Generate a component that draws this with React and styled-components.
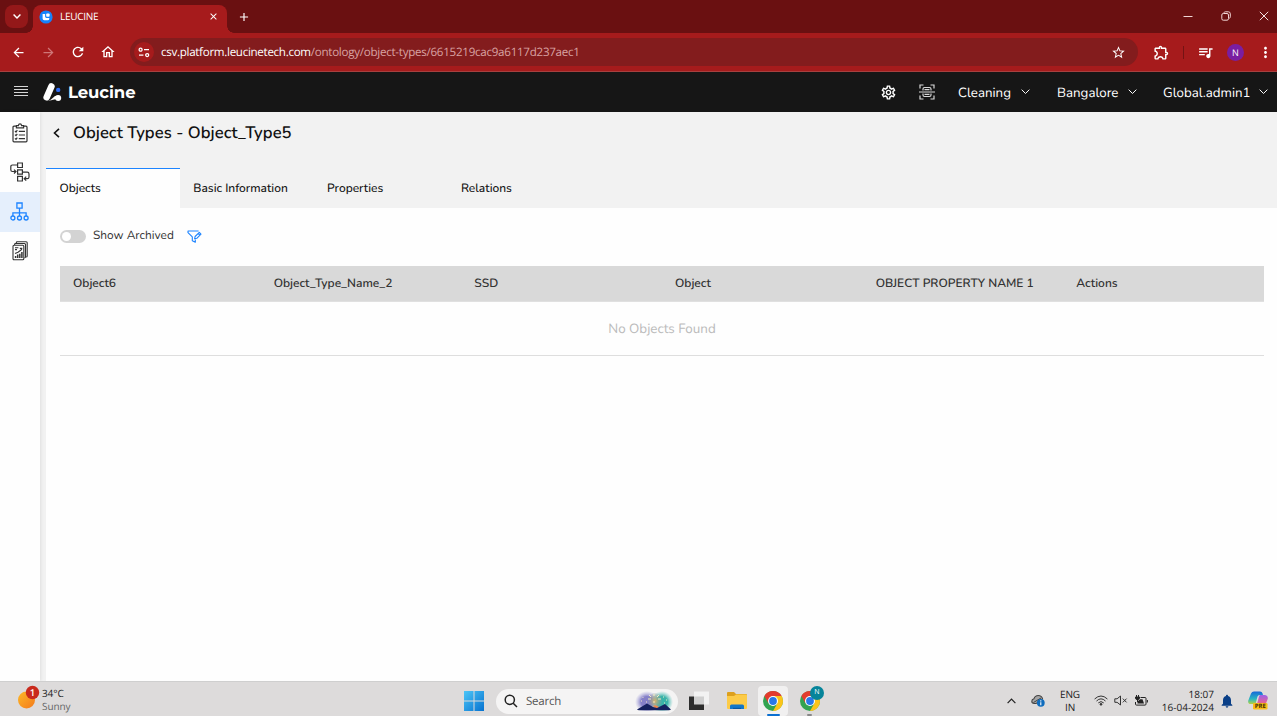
import React from 'react';
import styled, {createGlobalStyle, css} from 'styled-components';
import {
    MdArrowBack,
    MdArrowForward,
    MdClose,
    MdMoreVert,
    MdOutlineExtension,
    MdOutlineHome,
    MdOutlineSettings,
    MdQueueMusic,
    MdRefresh,
    MdStarBorder,
    MdAdd,
    MdNotifications
} from 'react-icons/md';

const appFont = `Nunito, Lato, 'Noto Sans', sans-serif`
const systemFont = `'Segoe UI', 'Open Sans', 'Noto Sans', sans-serif`

const tabs = ['Objects', 'Basic Information', 'Properties', 'Relations']
const columns = ['Object6', 'Object_Type_Name_2', 'SSD', 'Object', 'OBJECT PROPERTY NAME 1', 'Actions']

const Chevron = ({size = 9, color = '#fff', weight = 1.1}) => (
    <svg width={size} height={size * 0.6} viewBox="0 0 10 6" fill="none" stroke={color} strokeWidth={weight}>
        <path d="M.7.7 5 5 9.3.7"/>
    </svg>
)

const Favicon = () => (
    <svg width="14" height="14" viewBox="0 0 14 14">
        <circle cx="7" cy="7" r="6.6" fill="#1682fb"/>
        <path d="M3.600 4v4.600q0 1.700 1.700 1.700h3.400q1.600 0 1.600-1.500V7.900H7.400q-1.300 0-1.300-1.300V4z" fill="#fff"/>
        <rect x="7.200" y="3.400" width="3.400" height="3.400" rx=".8" fill="#fff"/>
    </svg>
)

const SiteInfo = () => (
    <svg width="12" height="11" viewBox="0 0 12 11" fill="none" stroke="#fff" strokeWidth="1.3">
        <circle cx="2.6" cy="2.7" r="1.5"/>
        <path d="M6 2.7h5M1 8.1h4.4"/>
        <circle cx="9.2" cy="8.1" r="1.5"/>
    </svg>
)

const LogoMark = () => (
    <svg width="19" height="20" viewBox="0 0 19 20">
        <path d="M3.700 15.300 8.400 4.500" stroke="#fff" strokeWidth="6.600" strokeLinecap="round"/>
        <path d="M5 18.500q3-.2 5-2.700 1.500-2.300 5-2.300v4q-3-.8-5 .3-1.500.8-5 .7z" fill="#fff"/>
        <circle cx="15.200" cy="16" r="3" fill="#fff"/>
        <circle cx="15.200" cy="7.900" r="2.200" fill="#2d6bf3"/>
    </svg>
)

const ScanIcon = () => (
    <svg width="16" height="16" viewBox="0 0 16 16" fill="none" stroke="#d8d8d8" strokeWidth="1.2">
        <path d="M1 4.5V1h3.5M11.5 1H15v3.5M15 11.5V15h-3.5M4.5 15H1v-3.5M0 8h16"/>
        <path d="M4 6.500V5q0-1.500 1.500-1.500h5q1.500 0 1.500 1.500v1.500M4 9.500V11q0 1.500 1.500 1.500h5q1.500 0 1.500-1.500V9.500M5.500 5.700h5M5.500 10.300h5"/>
    </svg>
)

const ClipboardIcon = () => (
    <svg width="16" height="20" viewBox="0 0 16 20" fill="none" stroke="#333" strokeWidth="1.2">
        <path d="M4.4 3.2H2q-1 0-1 1v13.600q0 1 1 1h12q1 0 1-1V4.200q0-1-1-1h-2.400"/>
        <path d="M4.4 4.8V2.6h2Q6.600.8 8 .8t1.600 1.8h2v2.200z"/>
        <path d="m3 8 1 1 1.300-1.800M3 11.700l1 1 1.300-1.800M3 15.400l1 1 1.300-1.800M6.800 8.300H13M6.800 12H13M6.800 15.700H13"/>
    </svg>
)

const WorkflowIcon = () => (
    <svg width="20" height="20" viewBox="0 0 20 20" fill="none" stroke="#333" strokeWidth="1.2">
        <path d="M7.600 1h4.800v4.500H7.600zM7.600 7.800h4.800v4.400H7.600zM7.600 14.400h4.800V19H7.600z"/>
        <path d="M7.600 3H2.500Q.8 3 .8 4.700v3q0 1.800 1.700 1.800h3M4 7.600l2 1.900-2 2M12.400 10.200h4.800q1.800 0 1.800 1.700v3q0 1.800-1.800 1.800h-2.600M16.200 14.700l-2 2 2 1.900"/>
    </svg>
)

const OntologyIcon = () => (
    <svg width="19" height="19" viewBox="0 0 19 19" fill="none" stroke="#1d84ff" strokeWidth="1.3">
        <path d="M6.900 1h5.200v5.200H6.900zM9.500 6.200v7.800M2.900 14v-3.200h13.200V14"/>
        <circle cx="2.900" cy="16" r="2"/>
        <circle cx="9.500" cy="16" r="2"/>
        <circle cx="16.100" cy="16" r="2"/>
    </svg>
)

const ReportIcon = () => (
    <svg width="16" height="20" viewBox="0 0 16 20" fill="none" stroke="#333" strokeWidth="1.1">
        <rect x="1" y="4.200" width="10.800" height="14.600" rx="1"/>
        <path d="M2.600 4V3.400q0-.9.9-.9h9q1 0 1 1v12.300q0 1-1 1M4.300 2.200V1.700q0-.9.9-.9h9q1 0 1 1V15q0 1-1 1"/>
        <path d="M3 6.700h3.400M3 8.600h2M7.800 7.400h2.500"/>
        <path d="M3.600 17v-2M5.700 17v-3.500M7.800 17v-4.200M9.900 17v-6" strokeWidth="1.500"/>
        <path d="m3 12.600 3-1.400 4-3"/>
    </svg>
)

const FilterIcon = () => (
    <svg width="15" height="13" viewBox="0 0 15 13" fill="none" stroke="#1d84ff" strokeWidth="1.100" strokeLinejoin="round">
        <path d="M11.600 1H1v1.700l4.300 4.200v3.900l3 1.500V9.500"/>
        <path d="m7.600 8.800.5-2.300 4.200-4.100 1.700 1.700L9.800 8.300zM11.200 3.500l1.700 1.700"/>
    </svg>
)

const WeatherIcon = () => (
    <svg width="24" height="26" viewBox="0 0 24 26">
        <defs>
            <linearGradient id="sun" x1="0" y1="0" x2="1" y2="1">
                <stop offset="0" stopColor="#fdb827"/>
                <stop offset="1" stopColor="#f47a1c"/>
            </linearGradient>
        </defs>
        <circle cx="9.500" cy="15" r="8.500" fill="url(#sun)"/>
        <circle cx="15.500" cy="7.500" r="6.700" fill="#c92a1d"/>
        <text x="15.500" y="11" fill="#fff" fontSize="9.500" textAnchor="middle" fontFamily="Open Sans" fontWeight="600">1</text>
    </svg>
)

const WindowsIcon = () => (
    <svg width="20" height="20" viewBox="0 0 20 20">
        <defs>
            <linearGradient id="win" x1="0" y1="0" x2="1" y2="1">
                <stop offset="0" stopColor="#4cc6f7"/>
                <stop offset="1" stopColor="#0671cf"/>
            </linearGradient>
        </defs>
        <path d="M0 0h9.500v9.500H0zM10.500 0H20v9.500h-9.500zM0 10.500h9.500V20H0zM10.500 10.500H20V20h-9.500z" fill="url(#win)"/>
    </svg>
)

const Fireworks = () => (
    <svg width="38" height="20" viewBox="0 0 38 20">
        <defs>
            <radialGradient id="violet"><stop offset=".5" stopColor="#8580c8"/><stop offset="1" stopColor="#aaa6dd" stopOpacity="0"/></radialGradient>
            <radialGradient id="teal"><stop offset=".5" stopColor="#39b3a9"/><stop offset="1" stopColor="#75ccc5" stopOpacity="0"/></radialGradient>
            <radialGradient id="glow"><stop offset="0" stopColor="#d9b26a"/><stop offset="1" stopColor="#7f9aa0" stopOpacity=".2"/></radialGradient>
        </defs>
        <ellipse cx="12" cy="11" rx="12" ry="11" fill="url(#violet)"/>
        <ellipse cx="27" cy="11" rx="11" ry="11" fill="url(#teal)"/>
        <ellipse cx="20" cy="10" rx="7" ry="8" fill="url(#glow)"/>
        <path d="m19 3 0 2M14 4l2 2M24 4l-2 2M13 8h3M23 8h3M8 6v.8M6 10h1M11 11h1M28 6h1M31 9h1M29 12h1M19 10v2" stroke="#fff4c4" strokeWidth=".9"/>
        <path d="M18 15q2.500-2 6 1l-3 2z" fill="#f0874c"/>
        <path d="M2 18.500 12 12.500l6 3.500 4 1 8-4 6 5.500q-1 .8-2 .8H4q-1.500 0-2-.8z" fill="#15215f"/>
    </svg>
)

const TaskViewIcon = () => (
    <svg width="20" height="20" viewBox="0 0 20 20">
        <rect y="5.500" width="15" height="13.500" fill="#2d2d2d"/>
        <rect x="5" y=".5" width="15" height="13" fill="#f7f7f7" fillOpacity=".8"/>
    </svg>
)

const FolderIcon = () => (
    <svg width="20" height="18" viewBox="0 0 20 18">
        <path d="M0 1q0-1 1-1h6l2 2h10q1 0 1 1v5H0z" fill="#dda01d"/>
        <path d="M0 4h7l2-1.500h10q1 0 1 1V16q0 1-1 1H1q-1 0-1-1z" fill="#fccb48"/>
        <path d="M3 17v-3q0-1.500 1.500-1.500h11q1.500 0 1.500 1.500v3z" fill="#1277c9"/>
        <path d="M6 17v-1.200h8V17z" fill="#0a569f"/>
    </svg>
)

const ChromeIcon = () => (
    <svg width="20" height="20" viewBox="0 0 20 20">
        <circle cx="10" cy="10" r="10" fill="#32a350"/>
        <path d="M1.340 5A10 10 0 0 1 18.660 5H10L5.670 12.500z" fill="#e33b2e"/>
        <path d="M18.660 5A10 10 0 0 1 10 20l4.330-7.500L10 5z" fill="#fcc419"/>
        <circle cx="10" cy="10" r="5" fill="#fff"/>
        <circle cx="10" cy="10" r="3.900" fill="#2878e8"/>
    </svg>
)

const CloudIcon = () => (
    <svg width="14" height="13" viewBox="0 0 14 13">
        <path d="M3.200 9.500Q.8 9.300.8 7.200T3 4.700Q4 1.500 7.300 1.500t4.200 3.200L10 7 5 9.500z" fill="#a5a5a5" stroke="#444" strokeWidth="1.100"/>
        <path d="M2.500 8.500 10 4" stroke="#444"/>
        <circle cx="9.800" cy="8.800" r="3.900" fill="#0f6cbd"/>
        <path d="M9.800 8.200v3M9.800 6.300v1.100" stroke="#fff" strokeWidth="1.100"/>
    </svg>
)

const WifiIcon = () => (
    <svg width="14" height="11" viewBox="0 0 14 11" fill="none" stroke="#333" strokeWidth="1">
        <path d="M.6 4Q7-2 13.400 4M2.500 6Q7 1.700 11.500 6M4.300 7.900Q7 5.300 9.700 7.900"/>
        <circle cx="7" cy="9.300" r=".9" fill="#333"/>
    </svg>
)

const MuteIcon = () => (
    <svg width="14" height="11" viewBox="0 0 14 11" fill="none" stroke="#333" strokeWidth="1">
        <path d="M.8 3.800h2.300L6.500 1v9L3.100 7.300H.8zM8.800 3.600l3.800 3.800M12.600 3.600 8.800 7.400"/>
    </svg>
)

const BatteryIcon = () => (
    <svg width="14" height="12" viewBox="0 0 14 12" fill="none" stroke="#222" strokeWidth="1">
        <path d="M6.500 2.500H11q1 0 1 1v5.600q0 1-1 1H2.500q-1 0-1-1V7M13.400 5v2.500"/>
        <path d="M3.500 8.600V6.500L6 4.300h2.500L10 8.600z" fill="#222" stroke="none"/>
        <path d="M2.500 0v2M4.500 0v2M1.500 2h4v1.300q0 1.200-2 1.200t-2-1.200zM3.500 4v3" fill="#222"/>
    </svg>
)

const CopilotIcon = () => (
    <svg width="20" height="19" viewBox="0 0 20 19">
        <defs>
            <linearGradient id="cpA" x1="0" y1="0" x2="0" y2="1">
                <stop offset="0" stopColor="#1668d9"/>
                <stop offset=".6" stopColor="#2ab7c2"/>
                <stop offset="1" stopColor="#b4d33f"/>
            </linearGradient>
            <linearGradient id="cpB" x1="0" y1="0" x2="0" y2="1">
                <stop offset="0" stopColor="#9b62e8"/>
                <stop offset="1" stopColor="#f2638a"/>
            </linearGradient>
        </defs>
        <path d="M6 .5h6q2 0 2.600 2L15 4h-3.500q-1.500 0-2 1.500L7.500 13H3q-3.500 0-2.700-3.500L3 2.500Q3.800.5 6 .5z" fill="url(#cpA)"/>
        <path d="M12 4h4.500q4 .5 3.200 4l-2 5H9l2-7.500Q11.300 4 12 4z" fill="url(#cpB)"/>
        <rect x="5" y="12" width="14.500" height="6.500" rx="1.200" fill="#fbbd19"/>
        <text x="12.300" y="17.400" fill="#3c2b00" fontSize="6" fontWeight="700" textAnchor="middle" fontFamily="Open Sans">PRE</text>
    </svg>
)

const App = () => (
    <>
        <GlobalStyle/>
        <Screen>
            <TabStrip>
                <TabSearch><Chevron size={8} weight={1.8}/></TabSearch>
                <BrowserTab>
                    <Favicon/>
                    <TabTitle>LEUCINE</TabTitle>
                    <MdClose size={11}/>
                </BrowserTab>
                <NewTab><MdAdd size={14}/></NewTab>
                <WindowControls>
                    <svg width="10" height="10" viewBox="0 0 10 10" stroke="#f0d5d5"><path d="M.5 5.500h9"/></svg>
                    <svg width="10" height="10" viewBox="0 0 10 10" fill="none" stroke="#f0d5d5">
                        <rect x=".8" y="2.500" width="6.700" height="6.700" rx="1.500"/>
                        <path d="M2.800 1.800Q3.200.8 4.300.8h3q2 0 2 2v3q0 1.200-1 1.500"/>
                    </svg>
                    <svg width="10" height="10" viewBox="0 0 10 10" stroke="#f5e0e0"><path d="m.8.8 8.400 8.400M9.200.8.800 9.200"/></svg>
                </WindowControls>
            </TabStrip>

            <Toolbar>
                <ToolButton><MdArrowBack size={15}/></ToolButton>
                <ToolButton $dim><MdArrowForward size={15}/></ToolButton>
                <ToolButton><MdRefresh size={16}/></ToolButton>
                <ToolButton><MdOutlineHome size={16}/></ToolButton>
                <Omnibox>
                    <SiteBadge><SiteInfo/></SiteBadge>
                    <Url><b>csv.platform.leucinetech.com</b>/ontology/object-types/6615219cac9a6117d237aec1</Url>
                    <MdStarBorder size={15}/>
                </Omnibox>
                <Extensions>
                    <MdOutlineExtension size={17}/>
                    <Separator/>
                    <MdQueueMusic size={17}/>
                    <Avatar>N</Avatar>
                    <MdMoreVert size={17}/>
                </Extensions>
            </Toolbar>

            <AppHeader>
                <Burger><i/><i/><i/><i/></Burger>
                <LogoMark/>
                <Brand>Leucine</Brand>
                <HeaderIcons>
                    <MdOutlineSettings size={17}/>
                    <ScanIcon/>
                </HeaderIcons>
                <Picker $width={99} $gap={27}><span>Cleaning</span><Chevron/></Picker>
                <Picker $width={106} $gap={26}><span>Bangalore</span><Chevron/></Picker>
                <Picker $width={114} $gap={9}><span>Global.admin1</span><Chevron/></Picker>
            </AppHeader>

            <Body>
                <Sidebar>
                    <SideItem><ClipboardIcon/></SideItem>
                    <SideItem><WorkflowIcon/></SideItem>
                    <SideItem $active><OntologyIcon/></SideItem>
                    <SideItem><ReportIcon/></SideItem>
                </Sidebar>
                <Main>
                    <Title>
                        <svg width="7" height="10" viewBox="0 0 7 10" fill="none" stroke="#111" strokeWidth="1.600"><path d="M6 .8 1.500 5 6 9.200"/></svg>
                        <h1>Object Types - Object_Type5</h1>
                    </Title>
                    <Tabs>
                        {tabs.map((name, i) => <Tab key={name} $active={i === 0}>{name}</Tab>)}
                    </Tabs>
                    <Panel>
                        <Filters>
                            <Toggle/>
                            <span>Show Archived</span>
                            <FilterIcon/>
                        </Filters>
                        <TableHead>
                            {columns.map(name => <HeadCell key={name}>{name}</HeadCell>)}
                        </TableHead>
                        <EmptyRow>No Objects Found</EmptyRow>
                    </Panel>
                </Main>
            </Body>

            <Taskbar>
                <Weather>
                    <WeatherIcon/>
                    <Lines><span>34°C</span><Muted>Sunny</Muted></Lines>
                </Weather>
                <Pinned>
                    <WindowsIcon/>
                    <SearchBox>
                        <svg width="14" height="14" viewBox="0 0 14 14" fill="none" stroke="#222" strokeWidth="1.500">
                            <circle cx="5.800" cy="5.800" r="4.600"/><path d="m9.200 9.200 3.800 3.800"/>
                        </svg>
                        <span>Search</span>
                        <Fireworks/>
                    </SearchBox>
                    <TaskItem $width={38}><TaskViewIcon/></TaskItem>
                    <TaskItem $width={37}><FolderIcon/></TaskItem>
                    <TaskItem $width={36}>
                        <OpenTile><ChromeIcon/></OpenTile>
                        <Running $active/>
                    </TaskItem>
                    <TaskItem $width={37}>
                        <ChromeIcon/>
                        <ProfileBadge>N</ProfileBadge>
                        <Running/>
                    </TaskItem>
                </Pinned>
                <Tray>
                    <TrayCell $width={25}>
                        <svg width="9" height="6" viewBox="0 0 9 6" fill="none" stroke="#222" strokeWidth="1.200"><path d="M.6 5.200 4.500 1.200l3.900 4"/></svg>
                    </TrayCell>
                    <TrayCell $width={27}><CloudIcon/></TrayCell>
                    <TrayCell $width={38}><Lines $align="center"><span>ENG</span><span>IN</span></Lines></TrayCell>
                    <TrayCell $width={24}><WifiIcon/></TrayCell>
                    <TrayCell $width={16}><MuteIcon/></TrayCell>
                    <TrayCell $width={24}><BatteryIcon/></TrayCell>
                    <Clock><span>18:07</span><span>16-04-2024</span></Clock>
                    <TrayCell $width={25}><MdNotifications size={16} color="#0a3f87"/></TrayCell>
                    <TrayCell $width={37}><CopilotIcon/></TrayCell>
                </Tray>
            </Taskbar>
        </Screen>
    </>
)

const GlobalStyle = createGlobalStyle`
  body {
    margin: 0;
    overflow: hidden;
    text-rendering: geometricPrecision;
  }

  *, *::before, *::after {
    box-sizing: border-box;
  }

  svg {
    flex: none;
    display: block;
  }
`

const Screen = styled.div`
  width: 1277px;
  height: 716px;
  display: flex;
  flex-direction: column;
  overflow: hidden;
  white-space: nowrap;
  font-family: ${appFont};
  background: #fefefe;
`

const TabStrip = styled.div`
  height: 33px;
  display: flex;
  align-items: flex-start;
  padding: 5px 0 0 5px;
  background: #6a1011;
  color: #fff;
  font-family: ${systemFont};
`

const TabSearch = styled.div`
  width: 23px;
  height: 23px;
  border-radius: 8px;
  display: flex;
  align-items: center;
  justify-content: center;
  background: #941819;
`

const BrowserTab = styled.div`
  position: relative;
  width: 194px;
  height: 28px;
  margin-left: 5px;
  padding: 0 8px 5px 6px;
  display: flex;
  align-items: center;
  border-radius: 8px 8px 0 0;
  background: #a61b1c;

  &::before, &::after {
    content: '';
    position: absolute;
    bottom: 0;
    width: 7px;
    height: 7px;
  }

  &::before {
    left: -7px;
    background: radial-gradient(circle at 0 0, transparent 6.500px, #a61b1c 7px);
  }

  &::after {
    right: -7px;
    background: radial-gradient(circle at 100% 0, transparent 6.500px, #a61b1c 7px);
  }
`

const TabTitle = styled.span`
  flex: 1;
  padding: 0 0 1px 7px;
  font-size: 10px;
  letter-spacing: -0.3px;
`

const NewTab = styled.div`
  margin-left: 10px;
  height: 23px;
  display: flex;
  align-items: center;
`

const WindowControls = styled.div`
  margin-left: auto;
  height: 22px;
  padding-right: 8px;
  display: flex;
  align-items: center;
  gap: 28px;
`

const Toolbar = styled.div`
  height: 39px;
  display: flex;
  align-items: center;
  padding-left: 3px;
  background: #a61b1c;
  border-bottom: 1px solid #a8403f;
  color: #fff;
  font-family: ${systemFont};
`

const ToolButton = styled.div`
  width: 30px;
  display: flex;
  justify-content: center;
  ${({$dim}) => $dim && css`color: #cf7677;`}
`

const Omnibox = styled.div`
  width: 1008px;
  height: 28px;
  margin-left: 7px;
  padding: 0 12px 0 4px;
  display: flex;
  align-items: center;
  border-radius: 14px;
  background: #831c1d;
`

const SiteBadge = styled.div`
  width: 20px;
  height: 20px;
  border-radius: 50%;
  display: flex;
  align-items: center;
  justify-content: center;
  background: #a61b1c;
`

const Url = styled.span`
  flex: 1;
  padding: 1px 0 0 7px;
  font-size: 11.600px;
  letter-spacing: -0.27px;
  color: #d9a3a3;

  b {
    font-weight: 400;
    letter-spacing: -0.3px;
    color: #fff;
  }
`

const Extensions = styled.div`
  flex: 1;
  display: flex;
  align-items: center;
  justify-content: space-between;
  padding: 0 3px 0 15px;
`

const Separator = styled.i`
  width: 1px;
  height: 13px;
  background: #741314;
`

const Avatar = styled.span`
  width: 17px;
  height: 17px;
  border-radius: 50%;
  background: #7a1ea1;
  font-size: 9px;
  line-height: 17px;
  text-align: center;
`

const AppHeader = styled.header`
  height: 40px;
  display: flex;
  align-items: center;
  padding-left: 14px;
  background: #161616;
  color: #fff;
`

const Burger = styled.div`
  width: 14px;
  margin: 0 15px 3px 0;
  display: flex;
  flex-direction: column;
  gap: 2px;

  i {
    height: 1px;
    background: #d5d5d5;
  }
`

const Brand = styled.span`
  margin-left: 6px;
  padding-top: 1px;
  font-family: Gilroy, Montserrat, Inter, sans-serif;
  font-size: 16.500px;
  font-weight: 700;
  letter-spacing: -0.1px;
`

const HeaderIcons = styled.div`
  margin-left: auto;
  padding-right: 23.500px;
  display: flex;
  align-items: center;
  gap: 22px;
`

const Picker = styled.div`
  width: ${({$width}) => $width}px;
  padding-right: ${({$gap}) => $gap}px;
  display: flex;
  align-items: center;
  justify-content: space-between;
  font-size: 13.300px;

  span {
    padding-top: 1px;
  }
`

const Body = styled.div`
  height: 569px;
  display: flex;
  background: #f2f2f2;
`

const Sidebar = styled.nav`
  width: 40px;
  padding-top: 1px;
  background: #fefefe;
  box-shadow: 1px 0 3px rgba(0, 0, 0, .08);
`

const SideItem = styled.div`
  height: 39.500px;
  padding-right: 1px;
  display: flex;
  align-items: center;
  justify-content: center;
  background: ${({$active}) => $active ? '#e5effc' : 'transparent'};
`

const Main = styled.main`
  flex: 1;
  margin-left: 6px;
  display: flex;
  flex-direction: column;
`

const Title = styled.div`
  height: 56px;
  padding: 10px 0 0 7px;
  display: flex;
  align-items: flex-start;

  svg {
    margin-top: 6px;
  }

  h1 {
    margin: 0 0 0 13px;
    font-size: 16.600px;
    line-height: 22px;
    font-weight: 650;
    letter-spacing: 0.05px;
    color: #111;
  }
`

const Tabs = styled.div`
  display: flex;
  height: 40px;
`

const Tab = styled.div`
  width: 133.800px;
  padding: 12px 13.500px 0;
  border-top: 1px solid ${({$active}) => $active ? '#1d84ff' : 'transparent'};
  background: ${({$active}) => $active ? '#fefefe' : 'transparent'};
  font-size: 12px;
  font-weight: 500;
  line-height: 16px;
  color: #111;
`

const Panel = styled.section`
  flex: 1;
  padding: 20px 13px 0 14px;
  background: #fefefe;
`

const Filters = styled.div`
  height: 16px;
  display: flex;
  align-items: center;
  font-size: 11.900px;
  color: #333;

  span {
    width: 101px;
    padding-left: 7px;
  }
`

const Toggle = styled.div`
  width: 26px;
  height: 13px;
  padding: 2px;
  border-radius: 7px;
  background: #d3d3d3;

  &::before {
    content: '';
    display: block;
    width: 9px;
    height: 9px;
    border-radius: 50%;
    background: #fff;
  }
`

const TableHead = styled.div`
  height: 36px;
  margin-top: 22px;
  display: grid;
  grid-template-columns: repeat(6, 1fr);
  align-items: center;
  background: #d9d9d9;
  border-bottom: 1px solid #e0e0e0;
`

const HeadCell = styled.div`
  padding: 1px 0 0 13px;
  font-size: 12px;
  font-weight: 650;
  color: #333;
`

const EmptyRow = styled.div`
  height: 54px;
  line-height: 54px;
  border-bottom: 1px solid #dedede;
  text-align: center;
  font-size: 13.400px;
  color: #bbb;
`

const Taskbar = styled.footer`
  height: 35px;
  display: grid;
  grid-template-columns: 464px 1fr 278px;
  background: #dddbdb;
  border-top: 1px solid #cfcfcf;
  font-family: ${systemFont};
  font-size: 10px;
  color: #222;
`

const Weather = styled.div`
  padding: 3px 0 0 17px;
  display: flex;
  align-items: flex-start;
  gap: 1px;
`

const Lines = styled.div`
  display: flex;
  flex-direction: column;
  text-align: ${({$align}) => $align || 'left'};
  line-height: 13px;
  padding-top: 2px;
  letter-spacing: -0.1px;
`

const Muted = styled.span`
  color: #666;
`

const Pinned = styled.div`
  display: flex;
  align-items: center;
  padding-top: 4px;
`

const SearchBox = styled.div`
  width: 182px;
  height: 25px;
  margin: 0 2px 0 12px;
  padding: 0 5px 0 8px;
  display: flex;
  align-items: center;
  border-radius: 13px;
  background: #f5f4f4;
  font-size: 11.500px;
  letter-spacing: -0.2px;
  color: #555;

  span {
    flex: 1;
    padding-left: 8px;
  }
`

const TaskItem = styled.div`
  position: relative;
  width: ${({$width}) => $width}px;
  height: 30px;
  display: flex;
  align-items: center;
  justify-content: center;
`

const OpenTile = styled.div`
  width: 30px;
  height: 30px;
  display: flex;
  align-items: center;
  justify-content: center;
  border-radius: 4px;
  background: #f1f0f0;
`

const Running = styled.i`
  position: absolute;
  bottom: 0;
  width: ${({$active}) => $active ? 13 : 5}px;
  height: 2px;
  border-radius: 1px;
  background: ${({$active}) => $active ? '#0b6fd0' : '#888'};
`

const ProfileBadge = styled.span`
  position: absolute;
  left: 19px;
  top: 0;
  width: 14px;
  height: 14px;
  border-radius: 50%;
  background: #06849a;
  color: #fff;
  font-size: 7px;
  line-height: 14px;
  text-align: center;
`

const Tray = styled.div`
  display: flex;
  align-items: center;
  padding-top: 3px;
`

const TrayCell = styled.div`
  width: ${({$width}) => $width}px;
  flex: none;
  display: flex;
  justify-content: center;

  ${Lines} {
    padding-top: 0;
  }
`

const Clock = styled.div`
  width: 61px;
  display: flex;
  flex-direction: column;
  align-items: flex-end;
  line-height: 13px;
`

export default App;
